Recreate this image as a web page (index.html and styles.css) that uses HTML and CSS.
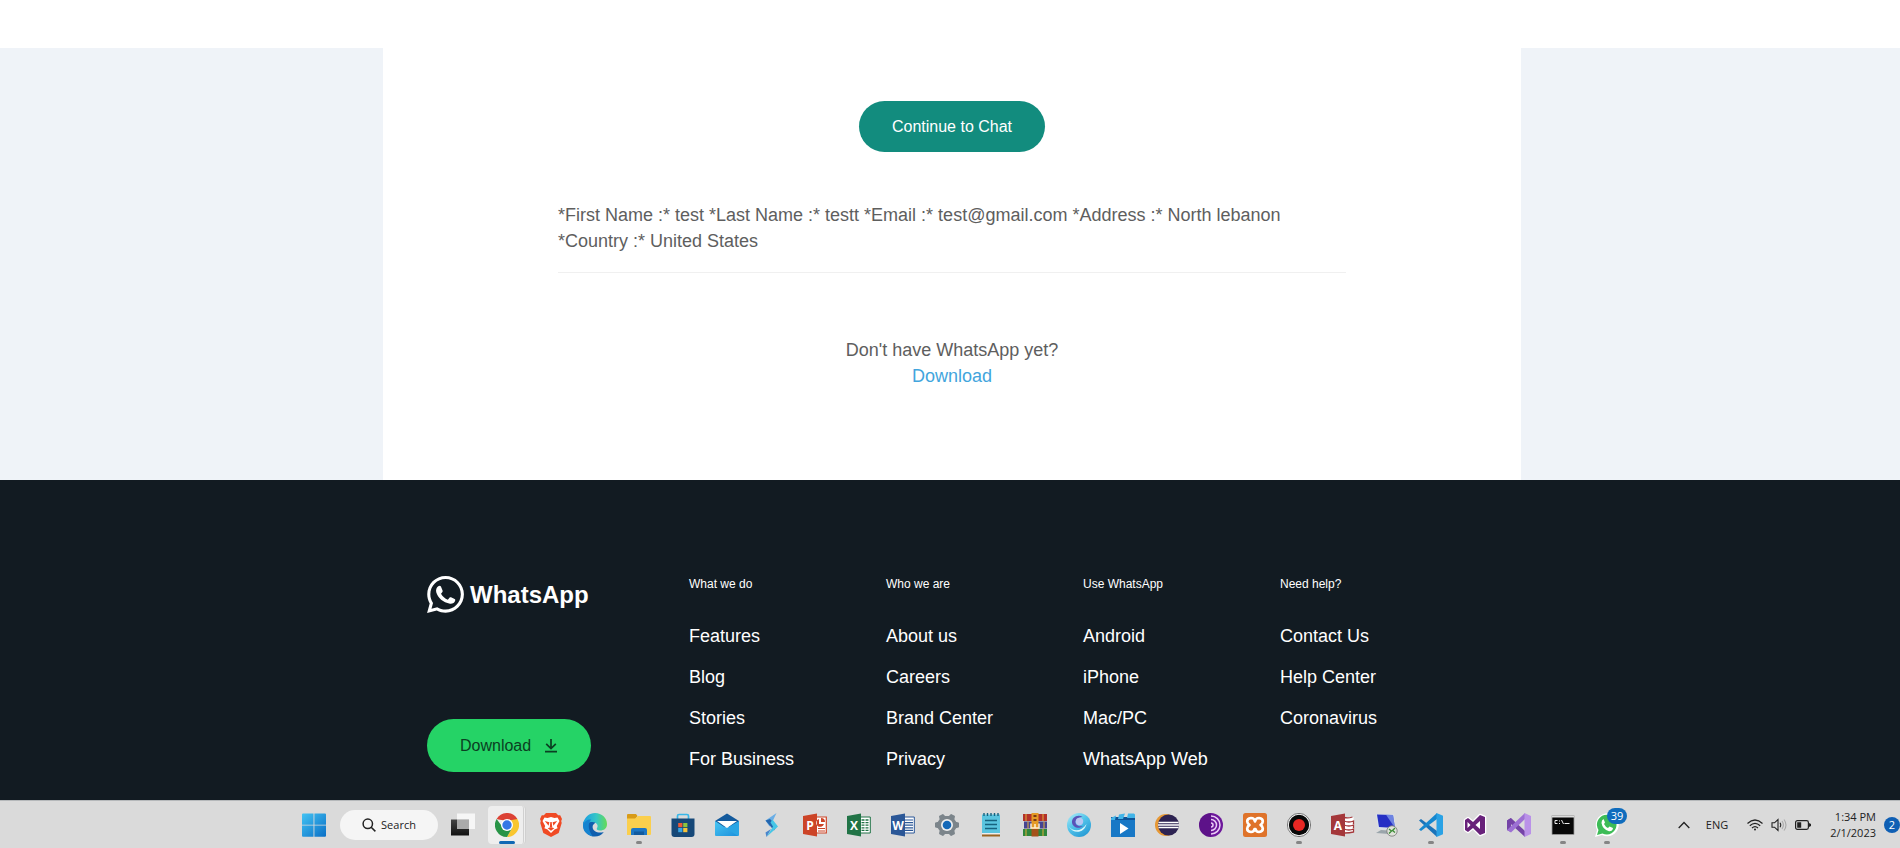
FILE: index.html
```html
<!DOCTYPE html>
<html lang="en">
<head>
<meta charset="utf-8">
<title>Share on WhatsApp</title>
<link rel="stylesheet" href="styles.css">
</head>
<body>
<main class="page">
  <section class="panel">
    <button class="chat-button" type="button">Continue to Chat</button>
    <p class="message">*First Name :* test *Last Name :* testt *Email :* test@gmail.com *Address :* North lebanon *Country :* United States</p>
    <p class="hint">Don't have WhatsApp yet?<br><a href="#download">Download</a></p>
  </section>
</main>

<footer class="footer">
  <div class="footer-inner">
    <div class="brand">
      <a class="logo" href="#home">
        <svg width="37" height="37" viewBox="0 0 24 24" fill="#fff" aria-hidden="true">
          <path d="M.057 24l1.687-6.163c-1.041-1.804-1.588-3.849-1.587-5.946.003-6.556 5.338-11.891 11.893-11.891 3.181.001 6.167 1.240 8.413 3.488 2.245 2.248 3.481 5.236 3.480 8.414-.003 6.557-5.338 11.892-11.893 11.892-1.990-.001-3.951-.5-5.688-1.448l-6.305 1.654zm6.597-3.807c1.676.995 3.276 1.591 5.392 1.592 5.448 0 9.886-4.434 9.889-9.885.002-5.462-4.415-9.890-9.881-9.892-5.452 0-9.887 4.434-9.889 9.884-.001 2.225.651 3.891 1.746 5.634l-.999 3.648 3.742-.981z"/>
          <path d="M7.300 6.700c.6-.6 1.500-.5 1.800.2l1 2.500c.1.300.1.600-.1.900l-.9 1.200c1 1.800 2.500 3.100 4.400 3.900l1.200-1.400c.3-.3.600-.3.900-.2l2.300 1.100c.5.300.5.600.4 1-.4 1.600-1.900 2.300-3.400 2.100C10.500 17.300 7 14.200 6 10.600c-.4-1.600.2-3.100 1.300-3.900z"/>
        </svg>
        <span>WhatsApp</span>
      </a>
      <button class="download-button" type="button">
        <span>Download</span>
        <svg width="14" height="15" viewBox="0 0 14 15" fill="none" stroke="#0b3f22" stroke-width="1.700" aria-hidden="true"><path d="M7 1v9.500M2.200 5.800 7 10.600l4.800-4.800M1 13.700h12"/></svg>
      </button>
    </div>
    <nav class="column" aria-labelledby="c1"><h2 id="c1">What we do</h2>
      <ul><li><a href="#f">Features</a></li><li><a href="#b">Blog</a></li><li><a href="#s">Stories</a></li><li><a href="#fb">For Business</a></li></ul></nav>
    <nav class="column" aria-labelledby="c2"><h2 id="c2">Who we are</h2>
      <ul><li><a href="#a">About us</a></li><li><a href="#c">Careers</a></li><li><a href="#bc">Brand Center</a></li><li><a href="#p">Privacy</a></li></ul></nav>
    <nav class="column" aria-labelledby="c3"><h2 id="c3">Use WhatsApp</h2>
      <ul><li><a href="#an">Android</a></li><li><a href="#ip">iPhone</a></li><li><a href="#m">Mac/PC</a></li><li><a href="#w">WhatsApp Web</a></li></ul></nav>
    <nav class="column" aria-labelledby="c4"><h2 id="c4">Need help?</h2>
      <ul><li><a href="#cu">Contact Us</a></li><li><a href="#h">Help Center</a></li><li><a href="#co">Coronavirus</a></li></ul></nav>
  </div>
</footer>

<div class="taskbar">
  <div class="apps">
    <button class="app" aria-label="Start"><svg viewBox="0 0 24 24"><defs><linearGradient id="win" x1="0" y1="0" x2="1" y2="1" gradientUnits="objectBoundingBox"><stop stop-color="#43c3f3"/><stop offset="1" stop-color="#0a6fc6"/></linearGradient></defs><path fill="url(#win)" d="M0 1.500Q0 .5 1 .5h10.500v11.200H0zM12.400.5H23q1 0 1 1v10.200H12.400zM0 12.500h11.500v11.200H1q-1 0-1-1zM12.400 12.500H24v10.200q0 1-1 1H12.400z"/></svg></button>
    <button class="search"><svg viewBox="0 0 14 14" fill="none" stroke="#222" stroke-width="1.500"><circle cx="5.800" cy="5.800" r="4.700"/><path d="m9.200 9.200 4.200 4.200"/></svg><span>Search</span></button>
    <button class="app" aria-label="Task view"><svg viewBox="0 0 24 24"><defs><linearGradient id="tv" x2="0" y2="1"><stop stop-color="#444"/><stop offset="1" stop-color="#111"/></linearGradient></defs><path fill="url(#tv)" d="M0 6.500h18v16H0z"/><path fill="#fff" opacity=".75" d="M6 .5h18v15.500H6z"/><path fill="#aaa" d="M6 6.500h12V16H6z"/></svg></button>
    <button class="app active" aria-label="Chrome"><svg viewBox="0 0 24 24"><path fill="#dc4235" d="M1.600 6a12 12 0 0 1 20.800 0L12 7z"/><path fill="#f9c62f" d="M22.400 6A12 12 0 0 1 12 24l5-9-1-9z"/><path fill="#289447" d="M1.600 6A12 12 0 0 0 12 24l5-9-8 1z"/><path fill="#dc4235" d="M1.600 6h20.800L12 8z"/><circle cx="12" cy="12" r="6" fill="#fff"/><circle cx="12" cy="12" r="4.700" fill="#3477e6"/></svg></button>
    <button class="app" aria-label="Brave"><svg viewBox="0 0 24 24"><path fill="#f04a24" d="M7 0h10l2.200 2.200h2L23 6l-.8 2 .5 2-3 10L12 24l-7.700-4-3-10 .5-2L1 6l1.800-3.800h2z"/><path fill="#fff" d="m5.500 4.500 3 .6 3.500-1 3.500 1 3-.6L20.500 8l-2.700 5 .8 2.200-3.100 1.300L12 20l-3.500-3.500-3.100-1.300.8-2.200L3.500 8z"/><path fill="#f04a24" d="m5.800 8 4.600 1.200-.8 3.600-1.800-2.200zM18.200 8l-4.600 1.200.8 3.600 1.800-2.200zM11.300 9h1.400l.5 5H10.800zM8.700 15.300 12 14l3.300 1.300L12 17.800z"/></svg></button>
    <button class="app" aria-label="Edge"><svg viewBox="0 0 24 24"><defs><linearGradient id="ed"><stop stop-color="#1b9de2"/><stop offset=".55" stop-color="#36c6c6"/><stop offset="1" stop-color="#65db55"/></linearGradient></defs><path fill="#0f5eae" d="M.4 9C3 5 10 5 13 9l-3 3c-2 5 4 9 10.800 7C18 23 13 24.500 8 23 2 21-.7 15 .4 9z"/><path fill="url(#ed)" d="M.4 10C1.500 4 6.500 0 12 0c7 0 12 5 12 11 0 4.500-3 6.500-7 6.500-2.500 0-4-1-3-2.500 2-3-1-6-4.500-6C5 9 1 11 .4 15z"/><path fill="#1683d0" d="M.2 12c1-4 5-6 8-5.500C5.500 9.500 4 15 9.500 23.300 4 22-.5 18 .2 12z"/></svg></button>
    <button class="app running" aria-label="File Explorer"><svg viewBox="0 0 24 24"><path fill="#d89b18" d="M0 2q0-1 1-1h8l1.500 2-2 3H0z"/><path fill="#fbcf4d" d="M0 5.500h8L11 3h12q1 0 1 1v17q0 1-1 1H0z"/><path fill="#1d76c4" d="M4 22v-5q0-2 2-2h12q2 0 2 2v5z"/><path fill="#125a9e" d="M7 18.500h10V22H7z"/></svg></button>
    <button class="app" aria-label="Store"><svg viewBox="0 0 24 24"><path fill="none" stroke="#38b7e9" stroke-width="1.700" d="M6.500 7V3q0-1.500 1.500-1.500h8q1.500 0 1.500 1.500v4"/><path fill="#164878" d="M.5 5.500h23V21q0 3-3 3h-17q-3 0-3-3z"/><path fill="#ee5a36" d="M7.200 10h4.200v4.200H7.200z"/><path fill="#8cc43e" d="M12.200 10h4.200v4.200h-4.200z"/><path fill="#37a5e5" d="M7.200 15h4.200v4.200H7.200z"/><path fill="#f6c33a" d="M12.200 15h4.200v4.200h-4.200z"/></svg></button>
    <button class="app" aria-label="Mail"><svg viewBox="0 0 24 24"><defs><linearGradient id="ml" y2="1"><stop stop-color="#48c6f2"/><stop offset="1" stop-color="#1c90dc"/></linearGradient></defs><path fill="#145a9c" d="M0 8 12 .5 24 8v6H0z"/><path fill="#fff" d="M2 8h20l-10 7z"/><path fill="#2aa5e4" d="M24 8v14q0 1-1 1H1l8-9.500 3 1.500z"/><path fill="url(#ml)" d="m0 8 23 15H1q-1 0-1-1z"/></svg></button>
    <button class="app" aria-label="Streamlabs"><svg viewBox="0 0 24 24"><path fill="#6aaee6" d="m17.500 0-11 7.500 4 6 3-5z"/><path fill="#2466ae" d="m6.500 7.500 8.500 10 3-4.500L11 6z"/><path fill="#47c6e6" d="m13.500 6.500 5.500 7-11.500 10.500 5-8 1.500-2.500-2.500-4z"/><path fill="#4a86cc" d="m7.500 24 4.500-8-5.500 3.500z"/></svg></button>
    <button class="app" aria-label="PowerPoint"><svg viewBox="0 0 24 24"><path fill="#fff" stroke="#cc4427" stroke-width="1.200" d="M12 4h11.300v16H12z"/><path fill="#cc4427" d="M0 3 14 .5v23L0 21zM16 6a4 4 0 1 0 5 5h-5zM18 5v4h4q0-4-4-4zM15 15h7v1h-7zM15 17.500h7v1h-7z"/><text x="7" y="16.500" class="office">P</text></svg></button>
    <button class="app" aria-label="Excel"><svg viewBox="0 0 24 24"><path fill="#fff" stroke="#217346" stroke-width="1" d="M12 4h11.300v16H12z"/><path stroke="#217346" stroke-width="1.300" stroke-dasharray="3 1" d="M14.500 7H22M14.500 9.600H22M14.500 12.200H22M14.500 14.800H22M14.500 17.400H22"/><path fill="#217346" d="M0 3 14 .5v23L0 21z"/><text x="7" y="16.500" class="office">X</text></svg></button>
    <button class="app" aria-label="Word"><svg viewBox="0 0 24 24"><path fill="#fff" stroke="#2b5797" stroke-width="1" d="M12 4h11.300v16H12z"/><path stroke="#2b5797" stroke-width="1.200" d="M14 7h8M14 9.600h8M14 12.200h8M14 14.800h8M14 17.400h8"/><path fill="#2b5797" d="M0 3 14 .5v23L0 21z"/><text x="7" y="16.500" class="office">W</text></svg></button>
    <button class="app" aria-label="Settings"><svg viewBox="0 0 24 24"><path fill="#7c858b" stroke="#7c858b" stroke-width="1.500" stroke-linejoin="round" d="m7.800 1.800 2 1.900h4.400l2-1.900 3 1.700-.6 2.800 2 3.200 2.700.8v3.400l-2.700.8-2 3.200.6 2.800-3 1.700-2-1.900H9.800l-2 1.900-3-1.700.6-2.800-2-3.200-2.700-.8v-3.400l2.700-.8 2-3.200-.6-2.800z"/><circle cx="12" cy="12" r="6" fill="#eee"/><circle cx="12" cy="12" r="4.300" fill="#1368b8"/></svg></button>
    <button class="app" aria-label="Notepad"><svg viewBox="0 0 24 24"><path fill="#5ac4df" d="M3 1.500h18V20H3z"/><path stroke="#16627f" stroke-width="1.400" d="M5 0v3M8.500 0v3M12 0v3M15.500 0v3M19 0v3M6 7.500h12M6 11.500h12M6 15.500h12"/><path fill="#eee" d="M3 20h18v1.500H3z"/><path fill="#9b6422" d="M3 21.500h18v2H3z"/></svg></button>
    <button class="app" aria-label="WinRAR"><svg viewBox="0 0 24 24"><path fill="#b3322b" d="M0 1h24v7H0z"/><path fill="#464492" d="M1 8.500h23v7H1z"/><path fill="#2f873c" d="M0 16h24v7H0z"/><path stroke="#e2ad3a" stroke-width="1" d="M3 1v7M5 8.500v7M3 16v7M20 1v7M21 8.500v7M20 16v7"/><path fill="#e59a25" d="M8.500 0h7v16h-7z"/><path fill="#a5521a" d="M8.500 16h7v7.500h-7z"/><path fill="#793914" d="M10.500 2h3v2h-3zM10.500 6h3v2h-3z"/><path fill="none" stroke="#fff0cf" stroke-width="1.500" d="M8 10.500v4.500h8v-4.500M12 11v4"/></svg></button>
    <button class="app" aria-label="Browser"><svg viewBox="0 0 24 24"><defs><linearGradient id="sw" x2=".7" y2="1"><stop stop-color="#b5eef7"/><stop offset=".5" stop-color="#52c4ea"/><stop offset="1" stop-color="#279bd5"/></linearGradient></defs><circle cx="12" cy="12" r="12" fill="url(#sw)"/><path fill="#5b52b8" d="M15.500 3.500C10 1 4.500 4.500 5 9.500c.6 5 7 7 11 3.500-4 1-7.500-.8-7.500-4 0-2.500 3-4.500 7-5.500z"/><circle cx="12.500" cy="8.500" r="3.700" fill="#b8c6f2"/><path fill="#ddf8fc" d="M1.500 13c4 6 13 6 18-2-2 9-13 11-18 2z"/></svg></button>
    <button class="app" aria-label="Movies"><svg viewBox="0 0 24 24"><path fill="#0d5297" d="M0 4h24v19q0 1-1 1H1q-1 0-1-1z"/><path fill="#1878c6" d="M0 7h24v16q0 1-1 1H1q-1 0-1-1z"/><path fill="#42b4e8" d="m0 5 5-2.500L4 7H0zM8 1.500l6-1L12 6H7zM17 .5h6l1 1V5h-8z"/><path fill="#fff" d="m9 10 8.500 5.500L9 21z"/></svg></button>
    <button class="app" aria-label="Eclipse"><svg viewBox="0 0 24 24"><circle cx="11" cy="12" r="11" fill="#e69835"/><circle cx="13.500" cy="12" r="10.500" fill="#2d2352"/><path stroke="#fff" stroke-width="1.300" d="M3.500 9.500h20M3 12h21M3.500 14.500h20"/></svg></button>
    <button class="app" aria-label="Tor"><svg viewBox="0 0 24 24"><circle cx="12" cy="12" r="12" fill="#6d179b"/><path fill="#3f0a68" d="M12 0a12 12 0 0 0 0 24z" opacity=".35"/><path fill="none" stroke="#e9cdf5" stroke-width="1.500" d="M12 3a9 9 0 0 1 0 18M12 6.500a5.500 5.500 0 0 1 0 11M12 10a2 2 0 0 1 0 4"/></svg></button>
    <button class="app" aria-label="XAMPP"><svg viewBox="0 0 24 24"><rect width="24" height="24" rx="2.500" fill="#df732a"/><path fill="none" stroke="#fff" stroke-width="2.600" stroke-linejoin="round" d="M8 5q3.500 0 4 3.500Q12.500 5 16 5q4 .5 3.800 3.500Q19.500 11 17.500 12q2 1 2.300 3.500Q20 18.500 16 19q-3 0-3.500-3h-1Q11 19 8 19q-4-.5-3.800-3.500Q4.500 13 6.500 12 4.500 11 4.200 8.500 4 5.500 8 5z"/></svg></button>
    <button class="app running" aria-label="Recorder"><svg viewBox="0 0 24 24"><circle cx="12" cy="12" r="11.600" fill="#fff" stroke="#555" stroke-width=".8"/><circle cx="12" cy="12" r="10.200" fill="#080808"/><circle cx="12" cy="12" r="6" fill="#e82723"/></svg></button>
    <button class="app" aria-label="Access"><svg viewBox="0 0 24 24"><path fill="#fff" d="M12 4h10.500v16H12z"/><path fill="none" stroke="#a4373a" stroke-width="1.300" d="M13 4.500q4 1 8.500-.5M13 8q5 2 9.500 0v3M13 12q5 2 9.500 0v3M13 16q5 2 9.500 0v3q-4 1-9 1"/><path fill="#a4373a" d="M0 3 14 .5v23L0 21z"/><text x="7" y="16.500" class="office">A</text></svg></button>
    <button class="app" aria-label="Remote Desktop"><svg viewBox="0 0 24 24"><path fill="#d9e1e7" d="m1 1 18 .5 2 16L3 16z"/><path fill="#2630c4" d="m2 1.500 16 .5 2 13L4 14z"/><path fill="#8ba6ef" d="m11 1.800 7 .2 2 13z" opacity=".7"/><path fill="#9aa5ab" d="m6 17 7 .5 1 3.500-13-1z"/><circle cx="17" cy="18" r="5.200" fill="#dfe3d9" stroke="#777" stroke-width=".8"/><path fill="none" stroke="#3d8c36" stroke-width="1.300" d="m14 16 2.500 2-2.500 2.500M20 15l-2.500 2.500 2.500 2"/></svg></button>
    <button class="app running" aria-label="VS Code"><svg viewBox="0 0 24 24"><path fill="#1a73b9" d="M0 7.500 2 6l16 12v6z"/><path fill="#1587cf" d="m0 16.500 2 1.500L18 6V0z"/><path fill="#2aa2e5" d="m17.500 0 6.500 2.800v18.400L17.500 24z"/></svg></button>
    <button class="app" aria-label="Visual Studio"><svg viewBox="0 0 24 24"><path fill="#fff" stroke="#fff" stroke-width="2.500" stroke-linejoin="round" d="m2 7 3-2 5 4 7-7 5 2v16l-5 2-7-7-5 4-3-2z"/><path fill="#68217a" fill-rule="evenodd" d="m2 7 3-2 5 4 7-7 5 2v16l-5 2-7-7-5 4-3-2zM4.500 9v6l3-3zM17 8l-4.500 4 4.500 4z"/></svg></button>
    <button class="app" aria-label="Visual Studio 2022"><svg viewBox="0 0 24 24"><path fill="#7543a7" d="M0 7.500 4 5v14l-4-2z"/><path fill="#7543a7" d="M4 5 18 18v6L0 7.500z"/><path fill="#9d70d4" d="M4 19.500 18 6V0L0 17z"/><path fill="#ba91e8" d="m17.500 0 6.500 3v18l-6.500 3z"/></svg></button>
    <button class="app running" aria-label="Command Prompt"><svg viewBox="0 0 24 24"><path fill="#080808" stroke="#9a9a9a" stroke-width=".8" d="M1 2.500h22v19H1z"/><path fill="#ddd" d="M1 2.500h22v2H1z"/><path fill="none" stroke="#eee" d="M6.500 7.500H4v3h2.500M8.500 7.500v1M8.500 10v1M10.500 7l2 4M13.500 10.500h5"/></svg></button>
    <button class="app running" aria-label="WhatsApp, 39 unread"><svg viewBox="0 0 24 24"><path fill="#fff" d="M0 24 2 17A11.500 11.500 0 1 1 7 22z"/><path fill="#3dbc57" d="M2 22 3.500 17A9.800 9.800 0 1 1 7.500 20.500z"/><path fill="#fff" d="M8.500 6 10 9.500 9 11q1.500 3 4 4l1.500-1.500 3.500 1.500q-.5 3.500-4 3.200Q7.500 16.500 6.500 10 6.500 7 8.500 6z"/></svg><span class="count">39</span></button>
  </div>
  <div class="tray">
    <svg width="12" height="8" viewBox="0 0 12 8" fill="none" stroke="#222" stroke-width="1.300"><path d="m.7 7 5.300-5.500L11.300 7"/></svg>
    <span class="language">ENG</span>
    <div class="status">
      <svg width="16" height="12" viewBox="0 0 16 12" fill="none" stroke="#222" stroke-width="1.200"><path d="M.5 4.500q7.500-7 15 0M2.800 6.700q5.200-4.800 10.400 0M5 9q3-2.700 6 0"/><circle cx="8" cy="10.500" r="1" fill="#222" stroke="none"/></svg>
      <svg width="16" height="14" viewBox="0 0 16 14" fill="none" stroke="#222" stroke-width="1.100"><path d="M1 4.800h2.500L7 1.500v11L3.500 9.200H1zM9 4.800q1.500 2.200 0 4.400"/><path stroke="#aaa" d="M11 3q2.800 4 0 8M13 1.500q4 5.500 0 11"/></svg>
      <svg width="16" height="10" viewBox="0 0 16 10" fill="none" stroke="#222" stroke-width="1.200"><rect x=".6" y=".6" width="12.800" height="8.800" rx="1.800"/><path fill="#222" stroke="none" d="M2.200 2.200h4v5.600h-4zM14 3l2 1v2l-2 1z"/></svg>
    </div>
    <time class="clock" datetime="2023-02-01T13:34">1:34 PM<br>2/1/2023</time>
    <span class="notices">2</span>
  </div>
</div>
</body>
</html>
```
FILE: styles.css
```css
* { box-sizing: border-box; }
body {
  margin: 0;
  min-height: 100vh;
  display: flex;
  flex-direction: column;
  background: #fff;
  font-family: "Liberation Sans", Arial, sans-serif;
}
button { border: 0; padding: 0; font: inherit; background: none; cursor: pointer; }
a { color: inherit; text-decoration: none; }

.page {
  margin-top: 48px;
  padding-left: 4px;
  background: #eff3f8;
}
.panel {
  max-width: 1138px;
  margin: 0 auto;
  padding: 53px 175px 91px;
  background: #fff;
  color: #5e5e5e;
  font-size: 18px;
  line-height: 26px;
  text-align: center;
}
.chat-button {
  height: 51px;
  padding: 0 33px;
  border-radius: 26px;
  background: #128c7e;
  color: #fff;
  font-size: 16px;
  display: block;
  margin: 0 auto;
}
.message {
  margin: 50px 0 64px;
  padding-bottom: 18px;
  border-bottom: 1px solid #f0f0f0;
  text-align: left;
}
.hint { margin: 0; }
.hint a { color: #42a5dd; }

.footer {
  flex: 1;
  padding: 96px 0 28px 4px;
  background: #121b22;
  color: #fff;
}
.footer-inner {
  max-width: 1138px;
  margin: 0 auto;
  padding: 0 44px;
  display: grid;
  grid-template-columns: 262px repeat(4, 197px);
}
.brand {
  display: flex;
  flex-direction: column;
  justify-content: space-between;
  align-items: flex-start;
}
.logo {
  display: flex;
  align-items: center;
  gap: 6px;
  font-size: 24px;
  font-weight: bold;
}
.download-button {
  height: 53px;
  padding: 0 33px;
  display: flex;
  align-items: center;
  gap: 13px;
  border-radius: 27px;
  background: #25d366;
  color: #0b3f22;
  font-size: 16px;
}
.column h2 {
  margin: 0 0 31px;
  font-size: 12px;
  font-weight: normal;
  line-height: 16px;
}
.column ul {
  margin: 0;
  padding: 0;
  list-style: none;
  display: grid;
  gap: 15px;
  font-size: 18px;
  line-height: 26px;
}

.taskbar {
  height: 48px;
  padding-left: 292px;
  display: flex;
  justify-content: space-between;
  background: #dadada;
  border-top: 1px solid #b5b8ba;
  color: #222;
  font-family: "Open Sans", sans-serif;
  font-size: 11px;
}
.apps { display: flex; align-items: center; }
.app {
  position: relative;
  width: 44px;
  height: 46px;
  display: flex;
  align-items: center;
  justify-content: center;
}
.app svg { width: 24px; height: 24px; position: relative; }
.active::before {
  content: "";
  position: absolute;
  inset: 4px 3px;
  border-radius: 4px;
  background: #eee;
  border-right: 3px double #d0d0d0;
}
.running::after, .active::after {
  content: "";
  position: absolute;
  bottom: 4px;
  width: 6px;
  height: 3px;
  border-radius: 2px;
  background: #858585;
}
.active::after { width: 16px; background: #0f68b4; }
.search {
  width: 98px;
  height: 30px;
  margin: 0 3px 0 4px;
  display: flex;
  align-items: center;
  justify-content: center;
  gap: 5px;
  border-radius: 15px;
  background: #f5f5f5;
  color: #222;
}
.search svg { width: 14px; height: 14px; }
.office {
  fill: #fff;
  font: bold 12px "Open Sans", sans-serif;
  text-anchor: middle;
}
.count {
  position: absolute;
  top: 6px;
  right: 2px;
  width: 20px;
  height: 16px;
  border-radius: 8px;
  background: #0f6cbd;
  color: #fff;
  line-height: 16px;
  text-align: center;
}
.tray { display: flex; align-items: center; }
.language { margin: 0 19px 0 16px; }
.status { display: flex; align-items: center; gap: 8px; margin-right: 19px; }
.clock { line-height: 16px; text-align: right; margin-right: 8px; }
.notices {
  width: 16px;
  height: 16px;
  border-radius: 8px;
  background: #0f5fb4;
  color: #fff;
  line-height: 16px;
  text-align: center;
}
```
